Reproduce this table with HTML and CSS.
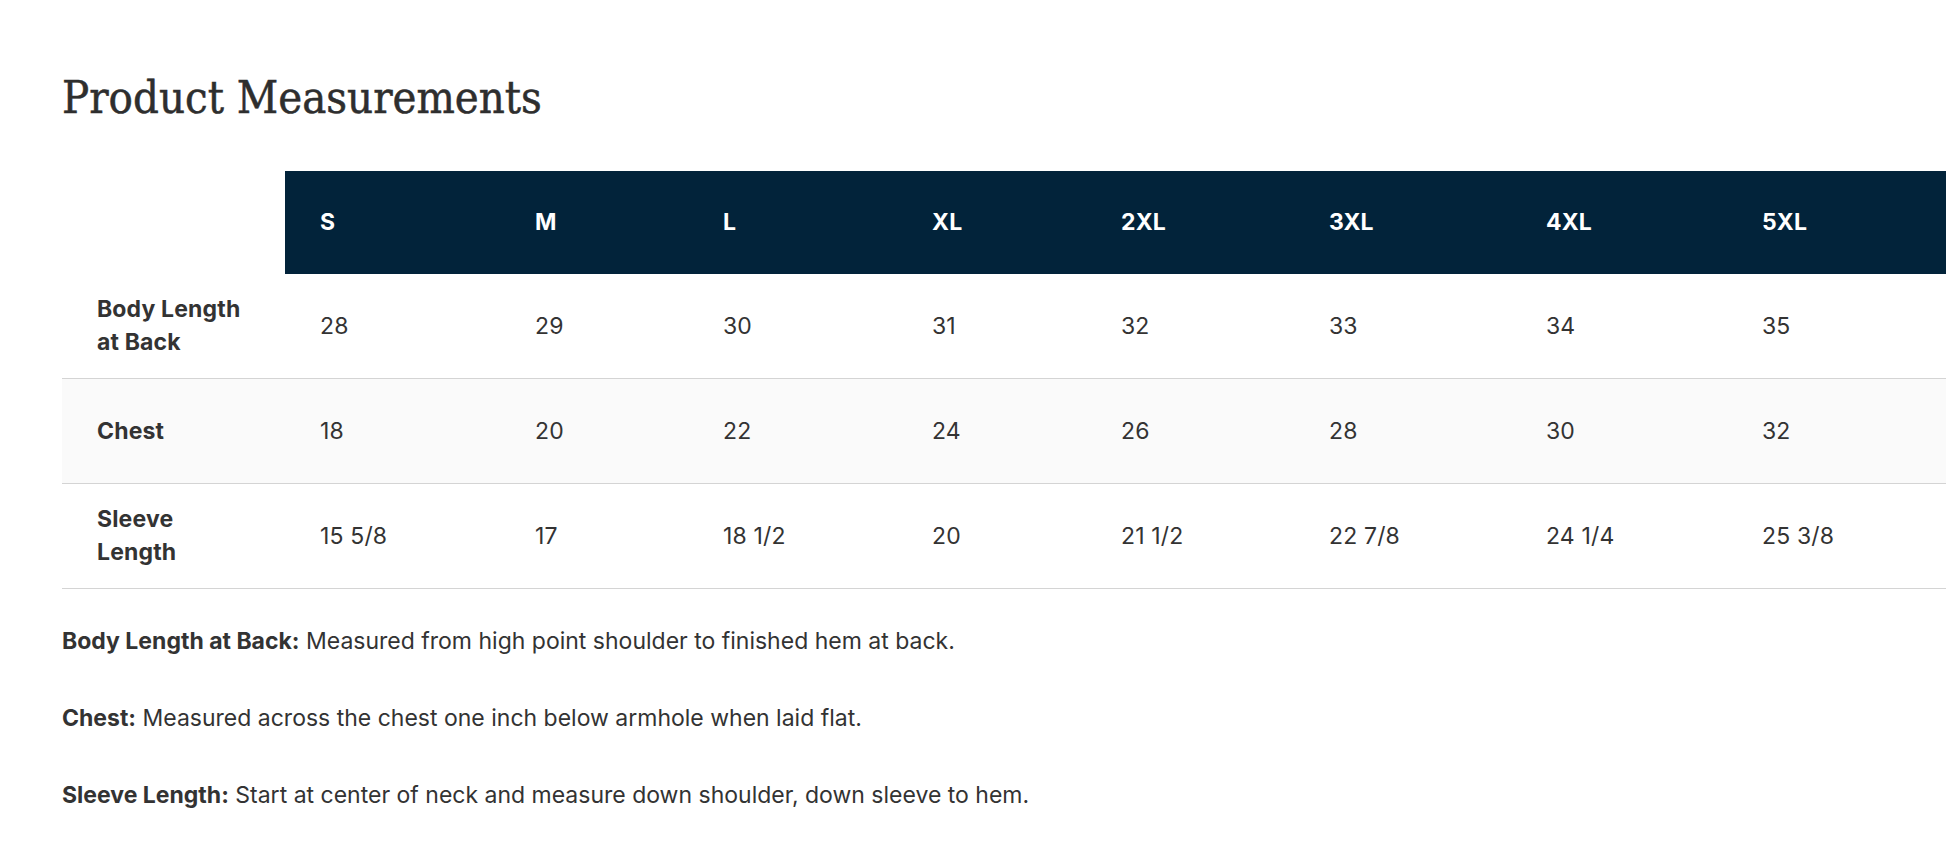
FILE: index.html
```html
<!DOCTYPE html>
<html lang="en">
<head>
<meta charset="utf-8">
<title>Product Measurements</title>
<link rel="stylesheet" href="styles.css">
</head>
<body>
<main class="page">
  <h1 class="title">Product Measurements</h1>
  <div class="table-wrap">
    <table class="size-table">
      <colgroup>
        <col class="c-label">
        <col class="c-s">
        <col class="c-m">
        <col class="c-l">
        <col class="c-xl">
        <col class="c-2xl">
        <col class="c-3xl">
        <col class="c-4xl">
        <col class="c-5xl">
      </colgroup>
      <thead>
        <tr>
          <th class="corner"></th>
          <th>S</th>
          <th>M</th>
          <th>L</th>
          <th>XL</th>
          <th>2XL</th>
          <th>3XL</th>
          <th>4XL</th>
          <th>5XL</th>
        </tr>
      </thead>
      <tbody>
        <tr>
          <th class="row-label">Body Length at Back</th>
          <td>28</td><td>29</td><td>30</td><td>31</td><td>32</td><td>33</td><td>34</td><td>35</td>
        </tr>
        <tr class="alt">
          <th class="row-label">Chest</th>
          <td>18</td><td>20</td><td>22</td><td>24</td><td>26</td><td>28</td><td>30</td><td>32</td>
        </tr>
        <tr>
          <th class="row-label">Sleeve Length</th>
          <td>15 5/8</td><td>17</td><td>18 1/2</td><td>20</td><td>21 1/2</td><td>22 7/8</td><td>24 1/4</td><td>25 3/8</td>
        </tr>
      </tbody>
    </table>
  </div>
  <div class="notes">
    <p><strong>Body Length at Back:</strong> Measured from high point shoulder to finished hem at back.</p>
    <p><strong>Chest:</strong> Measured across the chest one inch below armhole when laid flat.</p>
    <p><strong>Sleeve Length:</strong> Start at center of neck and measure down shoulder, down sleeve to hem.</p>
  </div>
</main>
</body>
</html>
```

FILE: styles.css
```css
html, body {
  margin: 0;
  padding: 0;
  background: #ffffff;
}

body {
  font-family: Inter, "Noto Sans", "Liberation Sans", sans-serif;
  color: #333333;
  overflow: hidden;
}

.page {
  padding: 68px 0 0 62px;
}

.title {
  margin: 0 0 43px 0;
  font-family: "DejaVu Serif", "Liberation Serif", serif;
  font-stretch: condensed;
  font-weight: 400;
  font-size: 45px;
  line-height: 60px;
  letter-spacing: 0;
  color: #2e2e2e;
  -webkit-text-stroke: 0.5px #2e2e2e;
}

.table-wrap {
  overflow: hidden;
}

.size-table {
  border-collapse: collapse;
  table-layout: fixed;
  width: 1900px;
  font-size: 23px;
  line-height: 33px;
  letter-spacing: 0.15px;
}

.c-label { width: 223px; }
.c-s { width: 215px; }
.c-m { width: 188px; }
.c-l { width: 209px; }
.c-xl { width: 189px; }
.c-2xl { width: 208px; }
.c-3xl { width: 217px; }
.c-4xl { width: 216px; }
.c-5xl { width: 235px; }

.size-table thead th {
  height: 103px;
  padding: 0 20px 0 35px;
  background: #02233a;
  color: #ffffff;
  font-weight: 700;
  text-align: left;
  vertical-align: middle;
}

.size-table thead th.corner {
  background: transparent;
}

.size-table tbody tr {
  border-bottom: 1px solid #d4d4d4;
}

.size-table tbody tr.alt {
  background: #fafafa;
}

.size-table tbody th,
.size-table tbody td {
  height: 104px;
  padding: 0 20px 0 35px;
  text-align: left;
  vertical-align: middle;
  color: #333333;
}

.size-table tbody td {
  font-weight: 400;
}

.size-table .row-label {
  font-weight: 700;
  padding-right: 30px;
}

.notes {
  padding-top: 36px;
  font-size: 23px;
  line-height: 33px;
}

.notes p {
  margin: 0 0 44px 0;
}

.notes strong {
  font-weight: 700;
}
```
